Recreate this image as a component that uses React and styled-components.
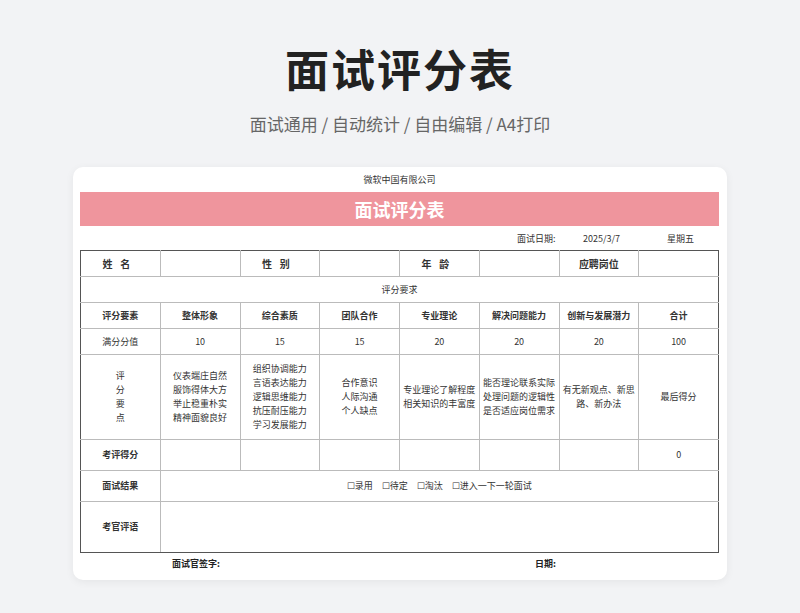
import React from 'react';
import styled, { createGlobalStyle } from 'styled-components';

const font = `"Noto Sans CJK SC", "Noto Sans", sans-serif`;

const Global = createGlobalStyle`
  html, body { margin: 0; padding: 0; background: #f2f3f5; font-family: ${font}; }
`;

const Page = styled.div`
  width: 800px;
  height: 613px;
  display: flex;
  flex-direction: column;
  align-items: center;
  box-sizing: border-box;
  padding-top: 38px;
`;

const Title = styled.h1`
  margin: 0;
  font-size: 44px;
  line-height: 60px;
  font-weight: 700;
  color: #222;
  letter-spacing: 2px;
`;

const Subtitle = styled.div`
  margin-top: 14px;
  font-size: 17px;
  line-height: 24px;
  color: #666;
  font-weight: 400;
`;

const Card = styled.div`
  margin-top: 31px;
  width: 654px;
  height: 413px;
  background: #fff;
  border-radius: 10px;
  box-shadow: 0 2px 8px rgba(0,0,0,0.06);
  box-sizing: border-box;
  padding: 5px 8px 0 7px;
`;

const Company = styled.div`
  text-align: center;
  font-size: 9px;
  line-height: 16px;
  color: #333;
`;

const Banner = styled.div`
  margin-top: 4px;
  height: 34px;
  background: #ef959d;
  color: #fff;
  font-size: 18px;
  font-weight: 700;
  display: flex;
  align-items: center;
  justify-content: center;
`;

const DateRow = styled.div`
  display: flex;
  justify-content: flex-end;
  font-size: 9px;
  color: #333;
  height: 24px;
  align-items: center;
`;

const DateCell = styled.span`
  width: ${p => p.w}px;
  text-align: ${p => p.align || 'left'};
`;

const Table = styled.table`
  width: 639px;
  border-collapse: collapse;
  table-layout: fixed;
  border: 1.5px solid #555;
  font-size: 9px;
  color: #333;
`;

const Td = styled.td`
  border: 1px solid #bbb;
  height: ${p => p.h}px;
  padding: 0 2px;
  text-align: center;
  vertical-align: middle;
  font-weight: ${p => (p.bold ? 700 : 400)};
  font-size: ${p => (p.big ? 10 : 9)}px;
  line-height: 14px;
  letter-spacing: ${p => p.spaced || 0}px;
  tr:first-child > & { border-top: 1.5px solid #555; }
  tr:last-child > & { border-bottom: 1.5px solid #555; }
  &:first-child { border-left: 1.5px solid #555; }
  &:last-child { border-right: 1.5px solid #555; }
`;

const Sign = styled.div`
  display: flex;
  font-size: 9px;
  font-weight: 700;
  color: #222;
  height: 20px;
  align-items: center;
`;

const SignLabel = styled.span`
  margin-left: ${p => p.ml}px;
`;

const Lines = ({ items }) => items.map((t, i) => <div key={i}>{t}</div>);

export default function App() {
  const heads = ['整体形象', '综合素质', '团队合作', '专业理论', '解决问题能力', '创新与发展潜力', '合计'];
  const scores = ['10', '15', '15', '20', '20', '20', '100'];
  const points = [
    ['仪表端庄自然', '服饰得体大方', '举止稳重朴实', '精神面貌良好'],
    ['组织协调能力', '言语表达能力', '逻辑思维能力', '抗压耐压能力', '学习发展能力'],
    ['合作意识', '人际沟通', '个人缺点'],
    ['专业理论了解程度', '相关知识的丰富度'],
    ['能否理论联系实际', '处理问题的逻辑性', '是否适应岗位需求'],
    ['有无新观点、新思', '路、新办法'],
    ['最后得分'],
  ];
  return (
    <>
      <Global />
      <Page>
        <Title>面试评分表</Title>
        <Subtitle>面试通用 / 自动统计 / 自由编辑 / A4打印</Subtitle>
        <Card>
          <Company>微软中国有限公司</Company>
          <Banner>面试评分表</Banner>
          <DateRow>
            <DateCell w={66}>面试日期:</DateCell>
            <DateCell w={84}>2025/3/7</DateCell>
            <DateCell w={52}>星期五</DateCell>
          </DateRow>
          <Table>
            <tbody>
              <tr>
                <Td h={25} bold big spaced={8}>姓名</Td>
                <Td />
                <Td bold big spaced={8}>性别</Td>
                <Td />
                <Td bold big spaced={8}>年龄</Td>
                <Td />
                <Td bold big>应聘岗位</Td>
                <Td />
              </tr>
              <tr><Td h={25} colSpan={8}>评分要求</Td></tr>
              <tr>
                <Td h={25} bold>评分要素</Td>
                {heads.map(h => <Td key={h} bold>{h}</Td>)}
              </tr>
              <tr>
                <Td h={25}>满分分值</Td>
                {scores.map((s, i) => <Td key={i}>{s}</Td>)}
              </tr>
              <tr>
                <Td h={84}><Lines items={['评', '分', '要', '点']} /></Td>
                {points.map((p, i) => <Td key={i}><Lines items={p} /></Td>)}
              </tr>
              <tr>
                <Td h={30} bold>考评得分</Td>
                {[0, 1, 2, 3, 4, 5].map(i => <Td key={i} />)}
                <Td>0</Td>
              </tr>
              <tr>
                <Td h={30} bold>面试结果</Td>
                <Td colSpan={7}>☐录用　☐待定　☐淘汰　☐进入一下一轮面试</Td>
              </tr>
              <tr>
                <Td h={50} bold>考官评语</Td>
                <Td colSpan={7} />
              </tr>
            </tbody>
          </Table>
          <Sign>
            <SignLabel ml={92}>面试官签字:</SignLabel>
            <SignLabel ml={315}>日期:</SignLabel>
          </Sign>
        </Card>
      </Page>
    </>
  );
}
